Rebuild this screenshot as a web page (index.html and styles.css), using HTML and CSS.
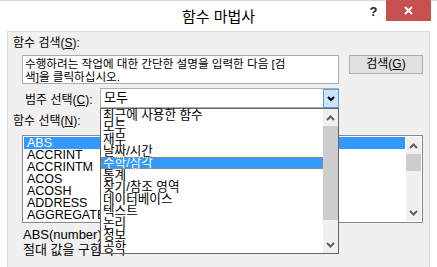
FILE: index.html
```html
<!doctype html>
<html lang="ko">
<head>
<meta charset="UTF-8">
<title>함수 마법사</title>
<link rel="stylesheet" href="styles.css">
</head>
<body>
<div class="window">
	<div class="titlebar">
		<span></span>
		<div class="title">함수 마법사</div>
		<div class="controls">
			<span class="help">?</span>
			<span class="close"><svg width="9" height="9" viewBox="0 0 9 9"><path d="M1 1L8 8M8 1L1 8" stroke="#fff" stroke-width="2"/></svg></span>
		</div>
	</div>
	<div class="panel">
		<div class="label">함수 검색(<u>S</u>):</div>
		<div class="search-row">
			<div class="search-box">수행하려는 작업에 대한 간단한 설명을 입력한 다음 [검<br>색]을 클릭하십시오.</div>
			<div class="btn">검색(<u>G</u>)</div>
		</div>
		<div class="category-row">
			<div class="category-label">범주 선택(<u>C</u>):</div>
			<div class="combo">
				<span class="combo-text">모두</span>
				<span class="combo-btn"><svg width="8" height="6" viewBox="0 0 8 6"><path d="M1 1L4 4L7 1" fill="none" stroke="#000" stroke-width="2"/></svg></span>
			</div>
		</div>
		<div class="label fn-label">함수 선택(<u>N</u>):</div>
		<div class="fn-list">
			<ul class="fn-items">
				<li class="sel">ABS</li>
				<li>ACCRINT</li>
				<li>ACCRINTM</li>
				<li>ACOS</li>
				<li>ACOSH</li>
				<li>ADDRESS</li>
				<li>AGGREGATE</li>
			</ul>
			<div class="scrollbar">
				<div class="arrow"><svg width="9" height="6" viewBox="0 0 9 6"><path d="M1 5L4.5 1.5L8 5" fill="none" stroke="#606060" stroke-width="2"/></svg></div>
				<div class="thumb short"></div>
				<div class="track"></div>
				<div class="arrow"><svg width="9" height="6" viewBox="0 0 9 6"><path d="M1 1L4.5 4.5L8 1" fill="none" stroke="#606060" stroke-width="2"/></svg></div>
			</div>
		</div>
		<div class="fn-desc">
			<div>ABS(number)</div>
			<div>절대 값을 구합니다.</div>
		</div>

		<div class="dropdown">
			<ul class="dd-items">
				<li>최근에 사용한 함수</li>
				<li>모두</li>
				<li>재무</li>
				<li>날짜/시간</li>
				<li class="sel">수학/삼각</li>
				<li>통계</li>
				<li>찾기/참조 영역</li>
				<li>데이터베이스</li>
				<li>텍스트</li>
				<li>논리</li>
				<li>정보</li>
				<li>공학</li>
			</ul>
			<div class="scrollbar">
				<div class="arrow"><svg width="9" height="6" viewBox="0 0 9 6"><path d="M1 5L4.5 1.5L8 5" fill="none" stroke="#606060" stroke-width="2"/></svg></div>
				<div class="thumb long"></div>
				<div class="track"></div>
				<div class="arrow"><svg width="9" height="6" viewBox="0 0 9 6"><path d="M1 1L4.5 4.5L8 1" fill="none" stroke="#606060" stroke-width="2"/></svg></div>
			</div>
		</div>
	</div>
</div>
</body>
</html>
```

FILE: styles.css
```css
body{margin:0;width:437px;height:267px;overflow:hidden;background:#fff;font-family:"Liberation Sans","Noto Sans CJK KR",sans-serif;font-size:12px;color:#000;}
ul,li{margin:0;padding:0;list-style:none;}
u{text-decoration:underline;text-underline-offset:1px;}

.window{height:267px;display:flex;flex-direction:column;box-sizing:border-box;border-top:1px solid #d8d8d8;}
.titlebar{height:30px;display:grid;grid-template-columns:1fr auto 1fr;align-items:start;flex:none;}
.title{font-size:15px;line-height:30px;padding-top:1px;}
.controls{justify-self:end;display:flex;align-items:flex-start;margin-right:6px;margin-top:-1px;}
.help{width:15px;margin-right:5px;text-align:center;font-weight:bold;font-size:13px;line-height:24px;color:#222;}
.close{width:45px;height:21px;background:#c75050;display:flex;align-items:center;justify-content:center;}

.panel{position:relative;flex:1;margin-left:7px;width:423px;box-sizing:border-box;border:1px solid #dadada;border-bottom:none;background:#f0f0f0;padding-top:3px;}
.label{margin-left:5px;height:16px;line-height:16px;}
.search-row{display:flex;gap:10px;margin:4px 0 0 14px;align-items:flex-start;}
.search-box{width:317px;height:29px;box-sizing:border-box;border:1px solid #abadb3;background:#fff;padding:1px 2px;font-size:11.6px;line-height:13px;white-space:nowrap;overflow:hidden;}
.btn{width:74px;height:19px;box-sizing:border-box;border:1px solid #adadad;background:#e1e1e1;text-align:center;line-height:17px;}

.category-row{display:flex;align-items:center;margin:4px 0 0 17px;height:20px;}
.category-label{width:75px;}
.combo{width:239px;height:20px;box-sizing:border-box;border:1px solid #abadb3;background:#fff;display:flex;}
.combo-text{flex:1;padding-left:3px;font-size:13px;line-height:18px;}
.combo-btn{width:16px;margin:0 -1px -1px 0;box-sizing:border-box;border:1px solid #569de5;background:#cce4f7;display:flex;align-items:center;justify-content:center;}

.fn-label{margin-top:5px;}
.fn-list{margin:6px 0 0 14px;width:401px;height:88px;box-sizing:border-box;border:1px solid #828790;background:#fff;display:flex;padding:1px;}
.fn-items{flex:1;}
.fn-items li{height:12px;line-height:12px;padding-left:3px;font-size:12.5px;}
.fn-items li.sel{background:#3399ff;color:#fff;margin-right:1px;}

.scrollbar{width:15px;display:flex;flex-direction:column;background:#f0f0f0;}
.arrow{height:17px;display:flex;align-items:center;justify-content:center;flex:none;}
.thumb{background:#cdcdcd;flex:none;}
.thumb.short{height:17px;}
.thumb.long{height:94px;}
.track{flex:1;}

.fn-desc{margin:4px 0 0 15px;line-height:15px;font-size:13px;}

.dropdown{position:absolute;left:92px;top:76px;width:239px;height:146px;box-sizing:border-box;border:1px solid #646464;background:#fff;display:flex;}
.dd-items{flex:1;}
.dd-items li{height:12px;line-height:12px;padding-left:2px;font-size:12.6px;white-space:nowrap;}
.dd-items li.sel{background:#3399ff;color:#fff;outline:1px dotted #c8843a;outline-offset:-1px;}
```
